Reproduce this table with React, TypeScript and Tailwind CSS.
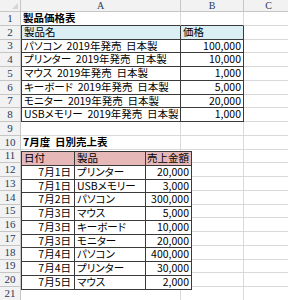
import React from "react";

const ROW_H = "h-[13.75px]";

const t1: [string, string][] = [
  ["パソコン  2019年発売  日本製", "100,000"],
  ["プリンター  2019年発売  日本製", "10,000"],
  ["マウス  2019年発売  日本製", "1,000"],
  ["キーボード  2019年発売  日本製", "5,000"],
  ["モニター  2019年発売  日本製", "20,000"],
  ["USBメモリー  2019年発売  日本製", "1,000"],
];

const t2: [string, string, string][] = [
  ["7月1日", "プリンター", "20,000"],
  ["7月1日", "USBメモリー", "3,000"],
  ["7月2日", "パソコン", "300,000"],
  ["7月3日", "マウス", "5,000"],
  ["7月3日", "キーボード", "10,000"],
  ["7月3日", "モニター", "20,000"],
  ["7月4日", "パソコン", "400,000"],
  ["7月4日", "プリンター", "30,000"],
  ["7月5日", "マウス", "2,000"],
];

const cellFont =
  "font-['Noto_Sans_CJK_JP',sans-serif] [font-feature-settings:'palt'] text-[10.5px] leading-none text-black whitespace-pre";

function RowNum({ n }: { n: number }) {
  return (
    <div className="w-[21px] shrink-0 flex items-center justify-center bg-[#f2f2f2] border-r border-b border-[#c6c6c6] font-['Liberation_Serif',serif] text-[11px] text-[#2a3a5c] leading-none">
      {n}
    </div>
  );
}

export default function App() {
  const rows = Array.from({ length: 21 }, (_, i) => i + 1);
  return (
    <div className="relative w-[288px] h-[300px] overflow-hidden bg-white">
      <div className="flex h-[12px]">
        <div className="relative w-[21px] shrink-0 bg-[#f2f2f2] border-r border-b border-[#c6c6c6]">
          <div className="absolute right-[2px] bottom-[2px] w-0 h-0 border-l-[6px] border-l-transparent border-b-[6px] border-b-[#d4d4d4]" />
        </div>
        <div className="w-[160px] shrink-0 bg-[#f2f2f2] border-r border-b border-[#c6c6c6] flex items-center justify-center font-['Liberation_Serif',serif] text-[10px] text-[#2a3a5c] leading-none">
          A
        </div>
        <div className="w-[63px] shrink-0 bg-[#f2f2f2] border-r border-b border-[#c6c6c6] flex items-center justify-center font-['Liberation_Serif',serif] text-[10px] text-[#2a3a5c] leading-none">
          B
        </div>
        <div className="w-[50px] shrink-0 bg-[#f2f2f2] border-r border-b border-[#c6c6c6] flex items-center justify-center font-['Liberation_Serif',serif] text-[10px] text-[#2a3a5c] leading-none">
          C
        </div>
      </div>

      {rows.map((n) => {
        const inT1 = n >= 2 && n <= 8;
        const above = n === 1;
        const isHead = n === 2;
        const d = inT1 ? t1[n - 3] : undefined;
        const gridB = "border-[#d9d9d9]";
        const aCls = inT1
          ? `border-l border-r border-b border-[#3a3a3a] ${isHead ? "bg-[#daeef3]" : ""}`
          : above
          ? "border-r border-b border-b-[#3a3a3a] border-r-[#d9d9d9]"
          : `border-r border-b ${gridB}`;
        const bCls = inT1
          ? `border-r border-b border-[#3a3a3a] ${isHead ? "bg-[#daeef3]" : ""}`
          : above
          ? "border-r border-b border-b-[#3a3a3a] border-r-[#d9d9d9]"
          : `border-r border-b ${gridB}`;
        const aText =
          n === 1 ? "製品価格表" : n === 2 ? "製品名" : n === 10 ? "7月度  日別売上表" : d ? d[0] : "";
        return (
          <div key={n} className={`flex ${ROW_H}`}>
            <RowNum n={n} />
            <div className={`w-[160px] shrink-0 flex items-center pl-[2px] ${aCls} ${cellFont} ${n === 1 || n === 10 ? "font-bold" : ""} relative z-10`}>
              {aText ? <span>{aText}</span> : null}
            </div>
            <div className={`w-[63px] shrink-0 flex items-center ${isHead ? "justify-start pl-[2px]" : "justify-end pr-[2px]"} ${bCls} ${cellFont}`}>
              {isHead ? "価格" : d ? d[1] : null}
            </div>
            <div className={`w-[50px] shrink-0 border-r border-b ${gridB}`} />
          </div>
        );
      })}

      <div className="absolute left-[21px] top-[151px] w-[171px] bg-white border-l border-t border-[#3a3a3a] z-20">
        <div className={`flex ${ROW_H} bg-[#e6b8b7]`}>
          <div className={`w-[53px] shrink-0 flex items-center pl-[2px] border-r border-b border-[#3a3a3a] ${cellFont}`}>日付</div>
          <div className={`w-[71px] shrink-0 flex items-center pl-[2px] border-r border-b border-[#3a3a3a] ${cellFont}`}>製品</div>
          <div className={`w-[46px] shrink-0 flex items-center pl-[1px] border-r border-b border-[#3a3a3a] ${cellFont}`}>売上金額</div>
        </div>
        {t2.map((r, i) => (
          <div key={i} className={`flex ${ROW_H}`}>
            <div className={`w-[53px] shrink-0 flex items-center justify-end pr-[3px] border-r border-b border-[#3a3a3a] ${cellFont}`}>{r[0]}</div>
            <div className={`w-[71px] shrink-0 flex items-center pl-[2px] border-r border-b border-[#3a3a3a] ${cellFont}`}>{r[1]}</div>
            <div className={`w-[46px] shrink-0 flex items-center justify-end pr-[2px] border-r border-b border-[#3a3a3a] ${cellFont}`}>{r[2]}</div>
          </div>
        ))}
      </div>
    </div>
  );
}
